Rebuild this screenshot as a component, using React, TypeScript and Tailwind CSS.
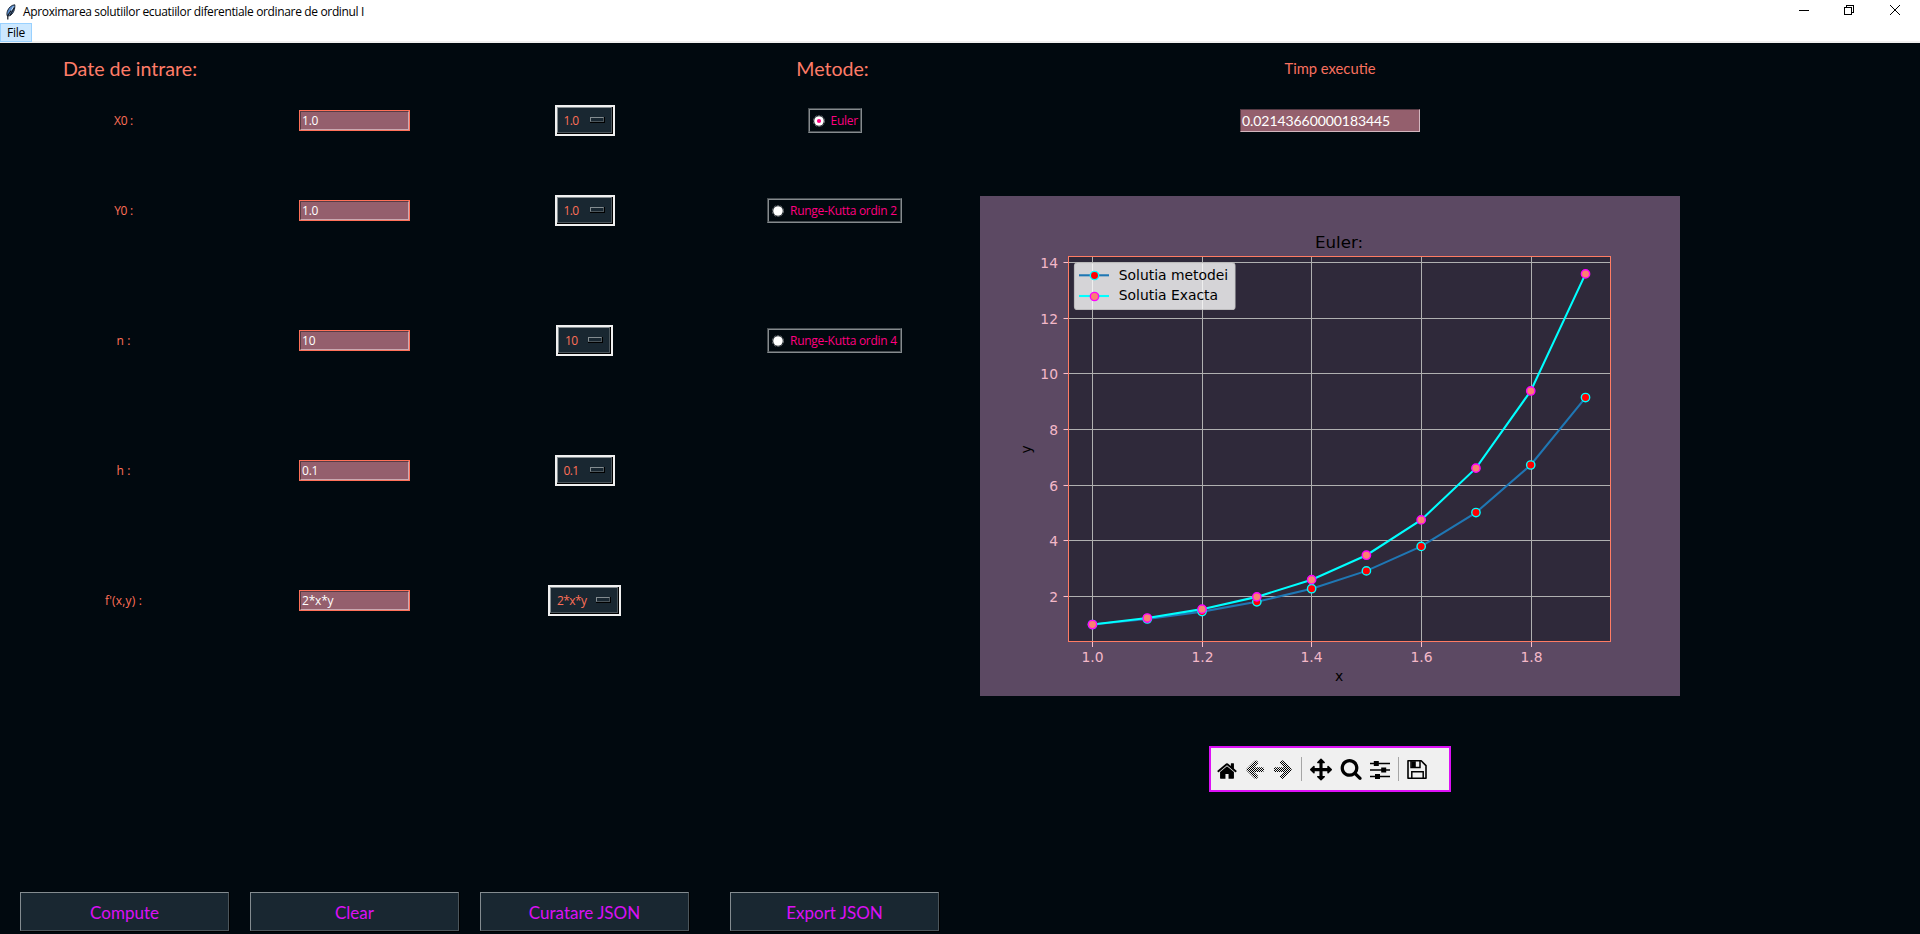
import type { ReactNode } from "react";

const HOME =
  "M1472 992v480q0 26-19 45t-45 19h-384v-384h-256v384h-384q-26 0-45-19t-19-45v-480q0-1 .5-3t.5-3l575-474 575 474q1 2 1 6zm223-69l-62 74q-8 9-21 11h-3q-13 0-21-7l-692-577-692 577q-12 8-24 7-13-2-21-11l-62-74q-8-10-7-23.5t11-21.5l719-599q32-26 76-26t76 26l244 204v-195q0-14 9-23t23-9h192q14 0 23 9t9 23v408l219 182q10 8 11 21.5t-7 23.5z";
const ARROW =
  "M1664 896v128q0 53-32.5 90.5t-84.5 37.5h-704l293 294q38 36 38 90t-38 90l-75 76q-37 37-90 37-52 0-91-37l-651-652q-37-37-37-90 0-52 37-91l651-650q38-38 91-38 52 0 90 38l75 74q38 38 38 91t-38 91l-293 293h704q52 0 84.5 37.5t32.5 90.5z";
const MOVE =
  "M1792 896q0 26-19 45l-256 256q-19 19-45 19t-45-19-19-45v-128h-384v384h128q26 0 45 19t19 45-19 45l-256 256q-19 19-45 19t-45-19l-256-256q-19-19-19-45t19-45 45-19h128v-384h-384v128q0 26-19 45t-45 19-45-19l-256-256q-19-19-19-45t19-45l256-256q19-19 45-19t45 19 19 45v128h384v-384h-128q-26 0-45-19t-19-45 19-45l256-256q19-19 45-19t45 19l256 256q19 19 19 45t-19 45-45 19h-128v384h384v-128q0-26 19-45t45-19 45 19l256 256q19 19 19 45z";
const SEARCH =
  "M1216 832q0-185-131.5-316.5t-316.5-131.5-316.5 131.5-131.5 316.5 131.5 316.5 316.5 131.5 316.5-131.5 131.5-316.5zm512 832q0 52-38 90t-90 38q-54 0-90-38l-343-342q-179 124-399 124-143 0-273.5-55.5t-225-150-150-225-55.5-273.5 55.5-273.5 150-225 225-150 273.5-55.5 273.5 55.5 225 150 150 225 55.5 273.5q0 220-124 399l343 343q37 37 37 90z";

function Feather() {
  return (
    <svg width="11" height="16" viewBox="0 0 11 16">
      <path d="M9.8.8C6.6 1 3.6 3.6 2.4 7.2c-.6 1.8-.6 3.4-.2 4.6h2.2c2-.9 3.6-2.6 4.4-4.6.9-2.2 1.2-4.4 1-6.4z" fill="#5b8fd0" stroke="#1b2430" strokeWidth="1" />
      <path d="M8.6 2.6L3.4 11" stroke="#cfe2f7" strokeWidth="1" />
      <path d="M9.4 3.5L5 11.5M6.2 6.5L2.8 11.5v4" stroke="#131a24" strokeWidth="1.2" fill="none" />
    </svg>
  );
}

function TitleBar() {
  return (
    <header className="flex h-[23px] items-center bg-white pl-[5px] pr-5">
      <Feather />
      <span className="ml-[7px] mt-px text-[12px] leading-4 tracking-[-0.35px] text-black">
        Aproximarea solutiilor ecuatiilor diferentiale ordinare de ordinul I
      </span>
      <div className="ml-auto flex pb-[3px]">
        <svg width="10" height="10" viewBox="0 0 10 10" shapeRendering="crispEdges">
          <path d="M0 5.5h10" stroke="#000" />
        </svg>
        <svg className="ml-[35px]" width="10" height="10" viewBox="0 0 10 10" shapeRendering="crispEdges" fill="none" stroke="#000">
          <path d="M.5 2.5h7v7h-7zM2.5 2.5v-2h7v7h-2" />
        </svg>
        <svg className="ml-9" width="10" height="10" viewBox="0 0 10 10" stroke="#000">
          <path d="M0 0l10 10M10 0L0 10" />
        </svg>
      </div>
    </header>
  );
}

function Entry({ value }: { value: string }) {
  return (
    <div className="h-[21px] w-[111px] border border-[#ff7058]">
      <div className="flex h-full items-center border border-b-[#c9a9b1] border-l-[#573a44] border-r-[#c9a9b1] border-t-[#573a44] bg-[#945f6d] pl-px pt-px text-[12px] leading-none tracking-[-0.2px] text-white">
        {value}
      </div>
    </div>
  );
}

function OptionMenu({ value, width }: { value: string; width: string }) {
  return (
    <div className={"h-[31px] border-2 border-[#f0f0f0] bg-black " + width}>
      <div className="h-full pb-px pr-px">
        <div className="flex h-full items-center justify-between border border-b-[#4b555b] border-l-[#848c90] border-r-[#4b555b] border-t-[#848c90] bg-[#192731] pl-[6px] pr-[6px]">
          <span className="mt-px text-[12px] leading-none tracking-[-0.6px] text-[#ff7058]">{value}</span>
          <div className="h-[6px] w-[15px] bg-black pb-px pr-px">
            <div className="h-full border border-b-[#4b555b] border-l-[#848c90] border-r-[#4b555b] border-t-[#848c90] bg-[#192731]" />
          </div>
        </div>
      </div>
    </div>
  );
}

function Radio({ label, checked, width }: { label: string; checked?: boolean; width: string }) {
  return (
    <div className={"h-[25px] border border-b-[#858b8e] border-l-[#454b4f] border-r-[#858b8e] border-t-[#454b4f] " + width}>
      <div className="flex h-full items-center border border-b-[#454b4f] border-l-[#858b8e] border-r-[#454b4f] border-t-[#858b8e] pl-[3px]">
        <svg width="12" height="12" viewBox="0 0 12 12" className="shrink-0">
          <circle cx="6" cy="6" r="5.6" fill="none" stroke="#80868a" strokeWidth="0.8" strokeDasharray="2.5 1" />
          <circle cx="6" cy="6" r="4.8" fill="#fff" />
          {checked && <circle cx="6" cy="6" r="2.1" fill="#ff0080" />}
        </svg>
        <span className="ml-[6px] mt-px whitespace-nowrap text-[12px] leading-none tracking-[-0.28px] text-[#ff0080]">{label}</span>
      </div>
    </div>
  );
}

function ActionButton({ label }: { label: string }) {
  return (
    <div className="h-10 w-[210px] bg-black pb-px pr-px">
      <button className="flex h-full w-full items-center justify-center border border-b-[#4b555b] border-l-[#848c90] border-r-[#4b555b] border-t-[#848c90] bg-[#192731] font-['Lato',sans-serif] text-[17px] leading-none text-[#dc10f5]">
        <span className="mt-px">{label}</span>
      </button>
    </div>
  );
}

const EULER: number[] = [];
const EXACT: number[] = [];
for (let i = 0, y = 1; i < 10; i++) {
  const x = 1 + i * 0.1;
  EULER.push(y);
  EXACT.push(Math.exp(x * x - 1));
  y = y * (1 + 0.2 * x);
}
const px = (i: number) => 112.5 + i * 54.78;
const py = (v: number) => 400.7 - (v - 2) * 27.83;
const toPoints = (values: number[]) => values.map((v, i) => px(i) + "," + py(v)).join(" ");

const X_TICKS = [
  { x: 112.5, label: "1.0" },
  { x: 222.5, label: "1.2" },
  { x: 331.5, label: "1.4" },
  { x: 441.5, label: "1.6" },
  { x: 551.5, label: "1.8" },
];
const Y_TICKS = [
  { y: 400.5, label: "2" },
  { y: 344.5, label: "4" },
  { y: 289.5, label: "6" },
  { y: 233.5, label: "8" },
  { y: 177.5, label: "10" },
  { y: 122.5, label: "12" },
  { y: 66.5, label: "14" },
];

function Chart() {
  return (
    <svg width="700" height="500" viewBox="0 0 700 500" className="bg-[#5c4963] font-['DejaVu_Sans',sans-serif] text-[13.89px]">
      <rect x="88.5" y="60.5" width="542" height="385" fill="#2f293a" />
      {X_TICKS.map((t) => (
        <g key={t.label}>
          <path d={"M" + t.x + " 60v385"} stroke="#b0b0b0" />
          <path d={"M" + t.x + " 446v5"} stroke="#ffc0cb" />
          <text x={t.x} y="466" textAnchor="middle" fill="#f3b8c8">{t.label}</text>
        </g>
      ))}
      {Y_TICKS.map((t) => (
        <g key={t.label}>
          <path d={"M88 " + t.y + "h542"} stroke="#b0b0b0" />
          <path d={"M83.5 " + t.y + "h5"} stroke="#ffc0cb" />
          <text x="78" y={t.y + 5.5} textAnchor="end" fill="#f3b8c8">{t.label}</text>
        </g>
      ))}
      <polyline points={toPoints(EULER)} fill="none" stroke="#1f77b4" strokeWidth="2.08" />
      {EULER.map((v, i) => (
        <circle key={i} cx={px(i)} cy={py(v)} r="4.17" fill="#f00" stroke="#0ff" strokeWidth="1.39" />
      ))}
      <polyline points={toPoints(EXACT)} fill="none" stroke="#0ff" strokeWidth="2.08" />
      {EXACT.map((v, i) => (
        <circle key={i} cx={px(i)} cy={py(v)} r="4.17" fill="#fa8072" stroke="#f0f" strokeWidth="1.39" />
      ))}
      <rect x="88.5" y="60.5" width="542" height="385" fill="none" stroke="#ff7c64" />
      <text x="359" y="51.5" textAnchor="middle" fontSize="16.67">Euler:</text>
      <text x="359" y="485" textAnchor="middle">x</text>
      <text x="0" y="0" textAnchor="middle" transform="translate(50.5 253.5) rotate(-90)">y</text>
      <rect x="94.5" y="67" width="160.5" height="46.5" rx="2.8" fill="#fff" fillOpacity="0.8" stroke="#ccc" strokeOpacity="0.8" strokeWidth="1.2" />
      <path d="M99 79.3h30" stroke="#1f77b4" strokeWidth="2.08" />
      <circle cx="114.5" cy="79.5" r="4.17" fill="#f00" stroke="#0ff" strokeWidth="1.39" />
      <path d="M99 100h30" stroke="#0ff" strokeWidth="2.08" />
      <circle cx="114.5" cy="100.5" r="4.17" fill="#fa8072" stroke="#f0f" strokeWidth="1.39" />
      <text x="138.8" y="84">Solutia metodei</text>
      <text x="138.8" y="104">Solutia Exacta</text>
    </svg>
  );
}

function ToolIcon({ className, children }: { className: string; children: ReactNode }) {
  return (
    <svg width="24" height="24" viewBox="0 0 24 24" className={"shrink-0 " + className}>
      {children}
    </svg>
  );
}

function Toolbar() {
  return (
    <div className="flex h-[46px] w-[242px] items-center border-2 border-[#dd10f6] bg-[#f0f0f0]">
      <ToolIcon className="ml-1">
        <path d={HOME} transform="translate(1.2 3.2) scale(.01205)" />
      </ToolIcon>
      <ToolIcon className="ml-1">
        <defs>
          <pattern id="dither" width="2" height="2" patternUnits="userSpaceOnUse">
            <path d="M0 0h1v1H0zM1 1h1v1H1z" fill="#000" />
          </pattern>
        </defs>
        <svg x="1" y="1" width="22" height="22" viewBox="0 0 22 22">
          <clipPath id="back">
            <path d={ARROW} transform="scale(.01205)" />
          </clipPath>
          <rect width="22" height="22" fill="url(#dither)" clipPath="url(#back)" shapeRendering="crispEdges" />
        </svg>
      </ToolIcon>
      <ToolIcon className="ml-1">
        <svg x="1" y="1" width="22" height="22" viewBox="0 0 22 22">
          <clipPath id="forward">
            <path d={ARROW} transform="translate(22 0) scale(-.01205 .01205)" />
          </clipPath>
          <rect width="22" height="22" fill="url(#dither)" clipPath="url(#forward)" shapeRendering="crispEdges" />
        </svg>
      </ToolIcon>
      <div className="ml-[6px] h-6 w-px bg-[#a5a5a5]" />
      <ToolIcon className="ml-[7px]">
        <path d={MOVE} transform="translate(1 1.6) scale(.01228)" />
      </ToolIcon>
      <ToolIcon className="ml-[6px]">
        <path d={SEARCH} transform="translate(.8 .4) scale(.01265)" />
      </ToolIcon>
      <ToolIcon className="ml-[5px]">
        <path d="M2 6.5h20M2 13h20M2 19.5h20" stroke="#000" strokeWidth="1.6" />
        <path d="M5.8 4h5v5h-5zM13.2 10.5h5v5h-5zM7 17h5v5H7z" />
      </ToolIcon>
      <div className="ml-[6px] h-6 w-px bg-[#a5a5a5]" />
      <ToolIcon className="ml-[6px]">
        <path d="M3 3.8h13.2L21 8.6v12.6H3z" fill="none" stroke="#000" strokeWidth="1.6" strokeLinejoin="round" />
        <path d="M6.8 21v-6.2h11.4V21M6 4v6.4h9V4" fill="none" stroke="#000" strokeWidth="1.5" />
        <path d="M6.4 4.2h4.4v5.8H6.4z" />
      </ToolIcon>
    </div>
  );
}

const ROWS = [
  { label: "X0 :", value: "1.0", option: "w-[60px]", tracking: "tracking-[-0.3px]" },
  { label: "Y0 :", value: "1.0", option: "w-[60px]", tracking: "tracking-[-0.3px]" },
  { label: "n :", value: "10", option: "w-[57px]", tracking: "tracking-[0.2px]" },
  { label: "h :", value: "0.1", option: "w-[60px]", tracking: "tracking-[0.2px]" },
  { label: "f'(x,y) :", value: "2*x*y", option: "w-[73px]", tracking: "tracking-[0.2px]" },
];

const METHODS: ReactNode[] = [
  <Radio key="euler" label="Euler" checked width="w-[54px]" />,
  <Radio key="rk2" label="Runge-Kutta ordin 2" width="w-[135px]" />,
  <Radio key="rk4" label="Runge-Kutta ordin 4" width="w-[135px]" />,
];

export default function App() {
  return (
    <div className="flex h-[934px] w-[1920px] flex-col overflow-hidden bg-[#01090f] font-['Open_Sans','Noto_Sans',sans-serif]">
      <TitleBar />
      <nav className="flex h-5 items-start border-b-2 border-[#f0f0f0] bg-white">
        <button className="h-[19px] w-8 shrink-0 border border-[#99d1ff] bg-[#cce8ff] text-[12px] leading-[18px] tracking-[-0.3px] text-black">File</button>
      </nav>
      <main className="flex flex-1 pl-[10px]">
        <section className="flex w-[960px] flex-col">
          <div className="grid grid-cols-[229px_231px_229px_271px] grid-rows-[52px_51px_129px_131px_129px_131px] place-items-center">
            <h2 className="pb-px pl-[11px] font-['Lato',sans-serif] text-[19.6px] leading-none text-[#ff7c68]">Date de intrare:</h2>
            <span />
            <span />
            <h2 className="pb-px pr-1 font-['Lato',sans-serif] text-[19.6px] leading-none text-[#ff7c68]">Metode:</h2>
            {ROWS.map((row, i) => (
              <div key={row.label} className="contents">
                <span className={"pr-[2px] pt-px text-[12px] leading-none text-[#ff7058] " + row.tracking}>{row.label}</span>
                <Entry value={row.value} />
                <OptionMenu value={row.value} width={row.option} />
                <div>{METHODS[i]}</div>
              </div>
            ))}
          </div>
          <div className="mt-auto flex pb-[2px] pl-[10px]">
            <ActionButton label="Compute" />
            <div className="ml-5">
              <ActionButton label="Clear" />
            </div>
            <div className="ml-5">
              <ActionButton label="Curatare JSON" />
            </div>
            <div className="ml-10">
              <ActionButton label="Export JSON" />
            </div>
          </div>
        </section>
        <section className="ml-[10px] flex w-[700px] flex-col items-center">
          <h3 className="mt-[18px] font-['Lato',sans-serif] text-[14.75px] leading-[15px] text-[#f9705f]">Timp executie</h3>
          <div className="mt-[33px] flex h-[23px] w-[180px] items-center border border-b-[#d3b7bf] border-l-[#573a44] border-r-[#d3b7bf] border-t-[#573a44] bg-[#945f6d] pl-px font-['Lato',sans-serif] text-[14px] leading-none tracking-[-0.07px] text-white">
            0.02143660000183445
          </div>
          <div className="mt-[64px]">
            <Chart />
          </div>
          <div className="mt-[50px]">
            <Toolbar />
          </div>
        </section>
      </main>
    </div>
  );
}
